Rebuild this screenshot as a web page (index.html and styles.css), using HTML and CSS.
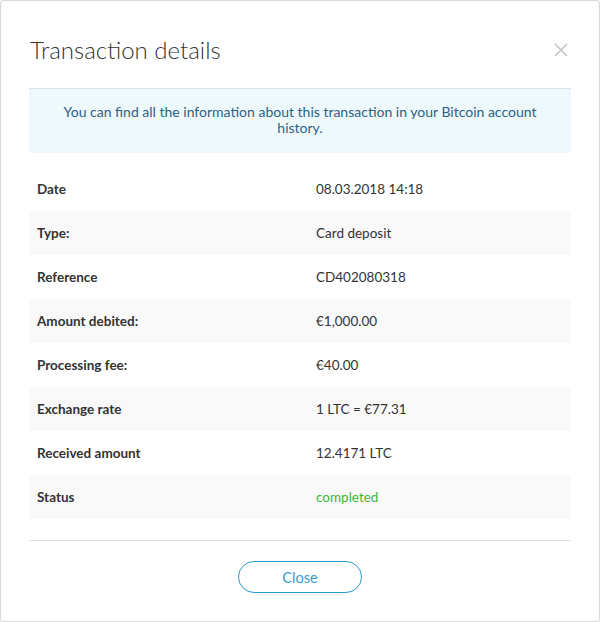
FILE: index.html
```html
<!DOCTYPE html>
<html>
<head>
<meta charset="utf-8">
<link rel="stylesheet" href="styles.css">
</head>
<body>
<div class="modal">
  <div class="header">
    <h1 class="title">Transaction details</h1>
    <button class="x" aria-label="Close">
      <svg width="14" height="14" viewBox="0 0 14 14"><path d="M1 1L13 13M13 1L1 13" stroke="#c4c4c4" stroke-width="1.6" fill="none"/></svg>
    </button>
  </div>
  <div class="info">You can find all the information about this transaction in your Bitcoin account history.</div>
  <div class="table">
    <div class="row"><span class="label">Date</span><span class="value">08.03.2018 14:18</span></div>
    <div class="row"><span class="label">Type:</span><span class="value">Card deposit</span></div>
    <div class="row"><span class="label">Reference</span><span class="value">CD402080318</span></div>
    <div class="row"><span class="label">Amount debited:</span><span class="value">€1,000.00</span></div>
    <div class="row"><span class="label">Processing fee:</span><span class="value">€40.00</span></div>
    <div class="row"><span class="label">Exchange rate</span><span class="value">1 LTC = €77.31</span></div>
    <div class="row"><span class="label">Received amount</span><span class="value">12.4171 LTC</span></div>
    <div class="row"><span class="label">Status</span><span class="value ok">completed</span></div>
  </div>
  <div class="footer">
    <button class="btn">Close</button>
  </div>
</div>
</body>
</html>
```
FILE: styles.css
```css
* { box-sizing: border-box; }
html, body { margin: 0; padding: 0; background: #fff; }
body { font-family: "Lato", "Open Sans", sans-serif; color: #333; }
.modal {
  width: 600px;
  height: 622px;
  border: 1px solid #d9d9d9;
  border-radius: 3px;
  padding: 0 28px;
  background: #fff;
}
.header {
  display: flex;
  align-items: center;
  justify-content: space-between;
  height: 87px;
  padding-top: 10px;
}
.title {
  margin: 0 0 0 1px;
  font-weight: 300;
  font-size: 24px;
  color: #333;
  letter-spacing: 0;
}
.x {
  border: 0;
  background: none;
  padding: 0;
  margin-right: 3px;
  display: flex;
  cursor: pointer;
}
.info {
  background: #eef9fc;
  border-top: 1px solid #d5e5ea;
  color: #2f5f7f;
  font-size: 14px;
  line-height: 16px;
  text-align: center;
  padding: 15px 24px 16px;
  height: 65px;
}
.table { margin-top: 14px; }
.row {
  display: flex;
  align-items: center;
  height: 44px;
  font-size: 13.5px;
}
.row:nth-child(even) { background: #f9f9f9; }
.label {
  width: 287px;
  padding-left: 8px;
  font-weight: 700;
  color: #333;
}
.value { color: #333; }
.value.ok { color: #3cb83c; }
.footer {
  margin-top: 21px;
  border-top: 1px solid #e2e2e2;
  padding-top: 20px;
  display: flex;
  justify-content: center;
}
.btn {
  width: 124px;
  height: 32px;
  border: 1px solid #2b9bd0;
  border-radius: 16px;
  background: #fff;
  color: #3a9ad6;
  font-family: "Lato", "Open Sans", sans-serif;
  font-size: 14.5px;
  cursor: pointer;
}
```
